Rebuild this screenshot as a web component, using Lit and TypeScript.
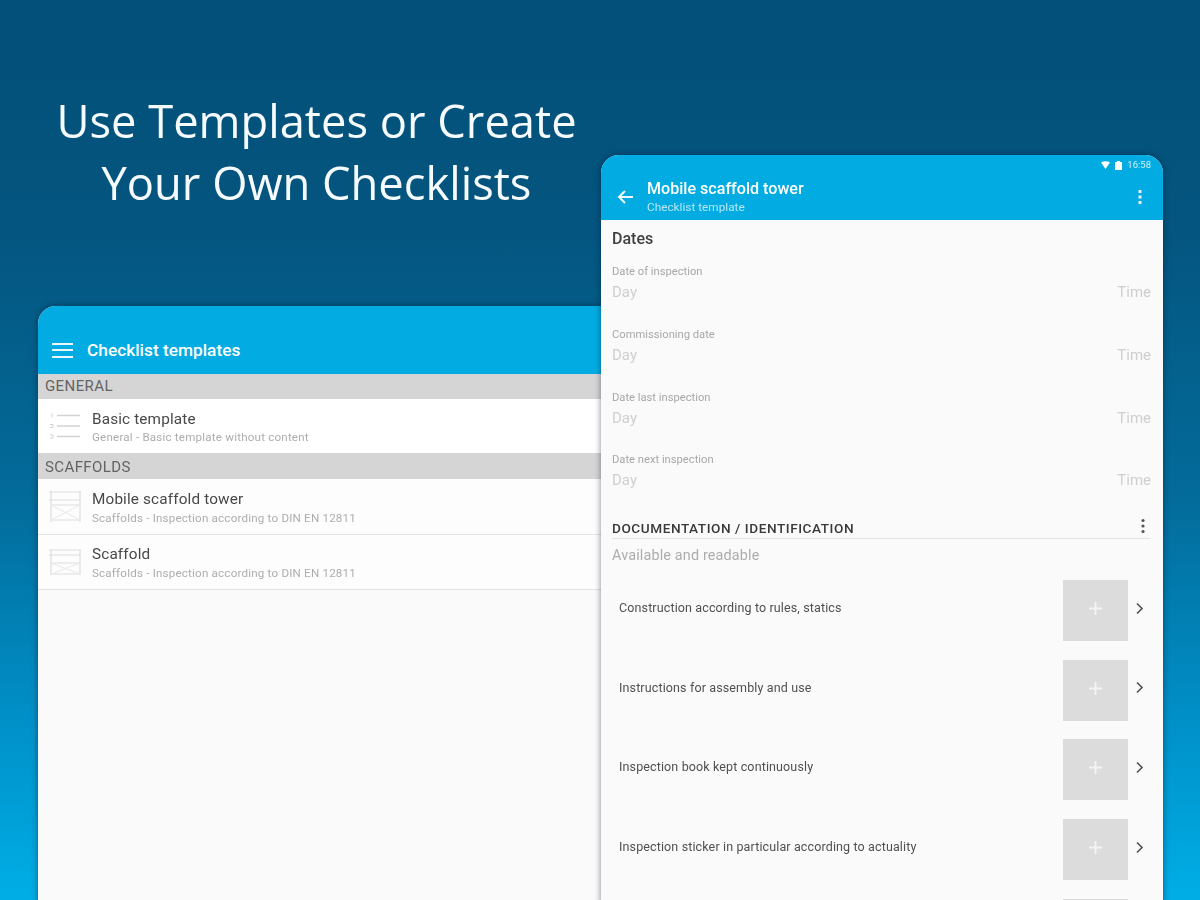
import { LitElement, html, css, svg } from "lit";
import { customElement } from "lit/decorators.js";

const dates = ["Date of inspection", "Commissioning date", "Date last inspection", "Date next inspection"];
const checks = [
  "Construction according to rules, statics",
  "Instructions for assembly and use",
  "Inspection book kept continuously",
  "Inspection sticker in particular according to actuality",
  "",
];

const listIcon = html`<svg class="ico" viewBox="0 0 34 34" aria-hidden="true">
  <g stroke="#d2d2d2" stroke-width="1.6" fill="none">
    <path d="M10 6.5h23M10 17h23M10 27.5h23" />
    <path d="M5 4.5v4M3 15.5h3v3H3M3 26h3v3H3" stroke-width="1" />
  </g>
</svg>`;

const scaffold = (top: number, r2: number, mid: number, low: number, bottom: number) =>
  svg`<g stroke="#dedede" stroke-width="1.2" fill="none">
  <path d="M4 ${top - 1}V${bottom}M33 ${top - 1}V${bottom}M2 ${top}H34M2 ${r2}H34M4 ${mid}H33M4 ${low}H33" />
  <path d="M4 ${mid}L33 ${low}M33 ${mid}L4 ${low}" stroke="#ebebeb" />
</g>`;

@customElement("app-root")
export class AppRoot extends LitElement {
  static styles = css`
    :host {
      display: block;
      width: 1200px;
      height: 900px;
      font-family: Roboto, "Liberation Sans", sans-serif;
    }
    .stage {
      position: relative;
      width: 1200px;
      height: 900px;
      overflow: hidden;
      background: linear-gradient(180deg, #03507a 0%, #04557f 25%, #036b9a 55%, #0090c8 80%, #00aee6 100%);
    }
    h1 {
      margin: 0;
      position: absolute;
      left: 0;
      top: 90px;
      width: 633px;
      text-align: center;
      color: #f6fbfd;
      font-family: "Open Sans", sans-serif;
      font-weight: 400;
      font-size: 45.3px;
      line-height: 62px;
      filter: blur(0.5px);
    }
    .tablet {
      position: absolute;
      background: #fafafa;
      box-shadow: 0 0 6px rgba(0, 20, 40, 0.5);
      overflow: hidden;
      display: flex;
      flex-direction: column;
      filter: blur(0.65px);
    }
    .left {
      left: 38px;
      top: 306px;
      width: 570px;
      height: 600px;
      border-radius: 18px 0 0 0;
    }
    .right {
      left: 601px;
      top: 155px;
      width: 562px;
      height: 750px;
      border-radius: 18px 18px 0 0;
    }
    .bar {
      background: #02ace2;
      color: #fff;
      flex: none;
      display: flex;
      align-items: center;
    }
    .left .bar {
      height: 68px;
      padding: 20px 0 0 14px;
      box-sizing: border-box;
      gap: 14px;
    }
    .burger {
      width: 21px;
      height: 15px;
      display: flex;
      flex-direction: column;
      justify-content: space-between;
    }
    .burger i {
      display: block;
      height: 2px;
      background: #e8f8fd;
    }
    .bar-title {
      font-size: 17.3px;
      font-weight: 500;
    }
    .section {
      height: 25px;
      flex: none;
      background: #d5d5d5;
      color: #646464;
      font-size: 15px;
      line-height: 25px;
      padding-left: 7px;
      letter-spacing: 0.4px;
    }
    .section + .item ~ .section { height: 26px; line-height: 29px; }
    .item {
      flex: none;
      height: 54px;
      box-sizing: border-box;
      background: #fff;
      display: flex;
      align-items: center;
      padding-left: 9px;
      gap: 11px;
    }
    .item.line {
      height: 55.5px;
      border-bottom: 1px solid #e2e2e2;
      background: #fdfdfd;
    }
    .ico {
      width: 34px;
      height: 34px;
      flex: none;
    }
    .text {
      padding-top: 4px;
    }
    .item-title {
      font-size: 15.3px;
      line-height: 18px;
      color: #484848;
      letter-spacing: 0.15px;
    }
    .item-sub {
      font-size: 11.6px;
      line-height: 18px;
      color: #adadad;
      letter-spacing: 0.2px;
    }
    .line .item-sub {
      padding-top: 1px;
    }
    .right .bar {
      height: 65px;
      position: relative;
      padding: 20px 0 0 16px;
      box-sizing: border-box;
      gap: 13px;
    }
    .status {
      position: absolute;
      right: 12px;
      top: 4px;
      display: flex;
      align-items: center;
      gap: 5px;
      font-size: 9.5px;
      line-height: 12px;
      color: #cdeefa;
    }
    .titles {
      display: flex;
      flex-direction: column;
    }
    .bar-sub {
      font-size: 11.8px;
      line-height: 17px;
      color: #b5e7f8;
    }
    .right .bar-title {
      font-size: 16.1px;
      line-height: 20px;
    }
    .back {
      margin-top: -2px;
    }
    .more {
      margin-left: auto;
      margin-right: 21px;
      margin-top: -2px;
      display: flex;
    }
    .body {
      padding: 10px 12px 0 11px;
      display: flex;
      flex-direction: column;
    }
    .dates-head {
      font-size: 16px;
      font-weight: 500;
      line-height: 18px;
      color: #404040;
      margin-bottom: 11px;
    }
    .date {
      height: 62.8px;
      flex: none;
      padding-top: 6px;
      box-sizing: border-box;
    }
    .date-label {
      font-size: 11.2px;
      line-height: 14px;
      color: #a8a8a8;
    }
    .date-vals {
      display: flex;
      justify-content: space-between;
      font-size: 15px;
      line-height: 18px;
      color: #cfcfcf;
      margin-top: 4px;
    }
    .doc-head {
      margin-top: -1.2px;
      box-sizing: border-box;
      height: 30px;
      padding-top: 9px;
      display: flex;
      align-items: center;
      justify-content: space-between;
      border-bottom: 1px solid #e4e4e4;
      font-size: 13.6px;
      font-weight: 500;
      color: #383838;
      letter-spacing: 0.55px;
      flex: none;
    }
    .doc-head svg { margin-right: 6px; margin-top: -4px; }
    .avail {
      font-size: 14.4px;
      line-height: 18px;
      margin-top: 8px;
      margin-bottom: 15px;
      color: #adadad;
      letter-spacing: 0.15px;
    }
    .check {
      height: 61px;
      flex: none;
      margin-bottom: 18.7px;
      display: flex;
      align-items: center;
      padding-left: 7px;
      font-size: 12.5px;
      color: #505050;
      letter-spacing: 0.13px;
    }
    .check span { flex: 1; margin-top: -6px; }
    .plus {
      width: 65px;
      height: 61px;
      box-sizing: border-box;
      padding-bottom: 4px;
      background: #dcdcdc;
      display: flex;
      align-items: center;
      justify-content: center;
      flex: none;
    }
    .chev {
      margin-left: 6.5px;
      margin-right: 7.5px;
      margin-top: -5px;
      flex: none;
    }
  `;

  render() {
    return html`<div class="stage">
      <h1>Use Templates or Create<br />Your Own Checklists</h1>

      <section class="tablet left">
        <div class="bar">
          <div class="burger"><i></i><i></i><i></i></div>
          <div class="bar-title">Checklist templates</div>
        </div>
        <div class="section">GENERAL</div>
        <div class="item">
          ${listIcon}
          <div class="text">
            <div class="item-title">Basic template</div>
            <div class="item-sub">General - Basic template without content</div>
          </div>
        </div>
        <div class="section">SCAFFOLDS</div>
        <div class="item line">
          <svg class="ico" viewBox="0 0 34 34" aria-hidden="true">${scaffold(3, 11, 16, 31, 33)}</svg>
          <div class="text">
            <div class="item-title">Mobile scaffold tower</div>
            <div class="item-sub">Scaffolds - Inspection according to DIN EN 12811</div>
          </div>
        </div>
        <div class="item line">
          <svg class="ico" viewBox="0 0 34 34" aria-hidden="true">${scaffold(5, 10, 18, 29, 30)}</svg>
          <div class="text">
            <div class="item-title">Scaffold</div>
            <div class="item-sub">Scaffolds - Inspection according to DIN EN 12811</div>
          </div>
        </div>
      </section>

      <section class="tablet right">
        <div class="bar">
          <div class="status">
            <svg width="9" height="8" viewBox="0 0 9 8" aria-hidden="true"><path d="M0 1.5Q4.5-1 9 1.5L4.5 8z" fill="#fff" /></svg>
            <svg width="7" height="9" viewBox="0 0 7 9" aria-hidden="true"><path d="M0 1h2V0h3v1h2v8H0z" fill="#fff" /></svg>
            <span>16:58</span>
          </div>
          <svg class="back" width="17" height="16" viewBox="0 0 17 16" aria-hidden="true"><path d="M16 8H2M8 2L2 8l6 6" fill="none" stroke="#eafaff" stroke-width="2" /></svg>
          <div class="titles">
            <div class="bar-title">Mobile scaffold tower</div>
            <div class="bar-sub">Checklist template</div>
          </div>
          <svg class="more" width="4" height="16" viewBox="0 0 4 16" aria-hidden="true"><g fill="#eef"><rect x="0.5" y="1" width="3" height="3" /><rect x="0.5" y="6.5" width="3" height="3" /><rect x="0.5" y="12" width="3" height="3" /></g></svg>
        </div>
        <div class="body">
          <div class="dates-head">Dates</div>
          ${dates.map(
            (d) => html`<div class="date">
              <div class="date-label">${d}</div>
              <div class="date-vals"><span>Day</span><span>Time</span></div>
            </div>`
          )}
          <div class="doc-head">
            <span>DOCUMENTATION / IDENTIFICATION</span>
            <svg width="4" height="16" viewBox="0 0 4 16" aria-hidden="true"><g fill="#555"><circle cx="2" cy="2.5" r="1.6" /><circle cx="2" cy="8" r="1.6" /><circle cx="2" cy="13.5" r="1.6" /></g></svg>
          </div>
          <div class="avail">Available and readable</div>
          ${checks.map(
            (c) => html`<div class="check">
              <span>${c}</span>
              <div class="plus">
                <svg width="15" height="15" viewBox="0 0 15 15" aria-hidden="true"><path d="M7.5 1v13M1 7.5h13" stroke="#f3f3f3" stroke-width="2" /></svg>
              </div>
              <svg class="chev" width="9" height="13" viewBox="0 0 9 13" aria-hidden="true"><path d="M2 1.5l5 5-5 5" fill="none" stroke="#555" stroke-width="1.7" /></svg>
            </div>`
          )}
        </div>
      </section>
    </div>`;
  }
}
